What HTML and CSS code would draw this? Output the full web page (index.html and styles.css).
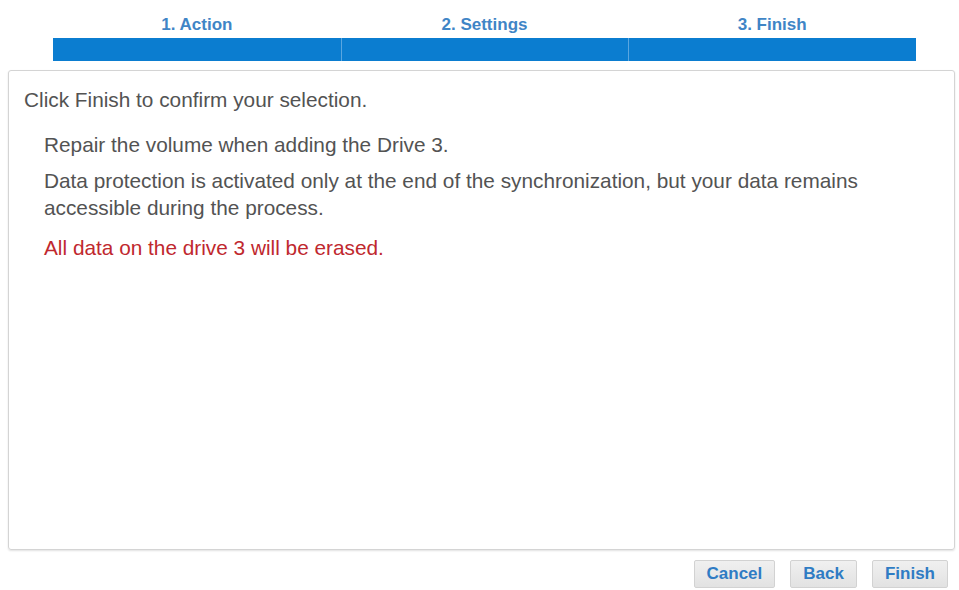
FILE: index.html
```html
<!DOCTYPE html>
<html lang="en">
<head>
  <meta charset="UTF-8" />
  <title>Repair Volume</title>
  <link rel="stylesheet" href="styles.css">
</head>
<body>
  <div class="wizard">
    <div class="steps">
      <div class="step">
        <span class="step-label">1. Action</span>
        <div class="step-bar"></div>
      </div>
      <div class="step">
        <span class="step-label">2. Settings</span>
        <div class="step-bar"></div>
      </div>
      <div class="step">
        <span class="step-label">3. Finish</span>
        <div class="step-bar"></div>
      </div>
    </div>

    <section class="panel">
      <p class="intro">Click Finish to confirm your selection.</p>
      <div class="summary">
        <p>Repair the volume when adding the Drive 3.</p>
        <p>Data protection is activated only at the end of the synchronization, but your data remains accessible during the process.</p>
        <p class="warning">All data on the drive 3 will be erased.</p>
      </div>
    </section>

    <div class="actions">
      <button class="btn">Cancel</button>
      <button class="btn">Back</button>
      <button class="btn">Finish</button>
    </div>
  </div>
</body>
</html>
```

FILE: styles.css
```css
* {
  margin: 0;
  padding: 0;
  box-sizing: border-box;
}

html, body {
  background: #ffffff;
  font-family: 'Liberation Sans', Arial, sans-serif;
  color: #535353;
}

.wizard {
  padding: 15px 4px 0 8px;
  width: 959px;
}

.steps {
  display: flex;
  margin: 0 39px 0 45px;
}

.step {
  flex: 1;
  display: flex;
  flex-direction: column;
  align-items: center;
}

.step-label {
  font-size: 17px;
  font-weight: 700;
  color: #3f85c6;
  height: 23px;
  line-height: 20px;
}

.step-bar {
  width: 100%;
  height: 23px;
  background: #0b7dd0;
  border-left: 1px solid #5aa6e0;
}

.step:first-child .step-bar {
  border-left: none;
}

.panel {
  margin-top: 9px;
  height: 480px;
  border: 1px solid #d4d4d4;
  border-radius: 3px;
  box-shadow: 0 1px 2px rgba(0, 0, 0, 0.12);
  padding: 16px 13px 16px 15px;
  font-size: 20.8px;
}

.intro {
  line-height: 26px;
}

.summary {
  padding: 18px 40px 0 20px;
}

.summary p {
  line-height: 27px;
  margin-bottom: 9px;
}

.summary .warning {
  margin-top: 13px;
  color: #c0282e;
}

.actions {
  display: flex;
  justify-content: flex-end;
  gap: 15px;
  padding: 10px 7px 0 0;
}

.btn {
  font-family: 'Liberation Sans', Arial, sans-serif;
  font-size: 17px;
  font-weight: 700;
  color: #2f7cc4;
  background: linear-gradient(#f0f0f0, #e2e2e2);
  border: 1px solid #d2d2d2;
  border-radius: 2px;
  height: 28px;
  padding: 0 12px;
}
```
